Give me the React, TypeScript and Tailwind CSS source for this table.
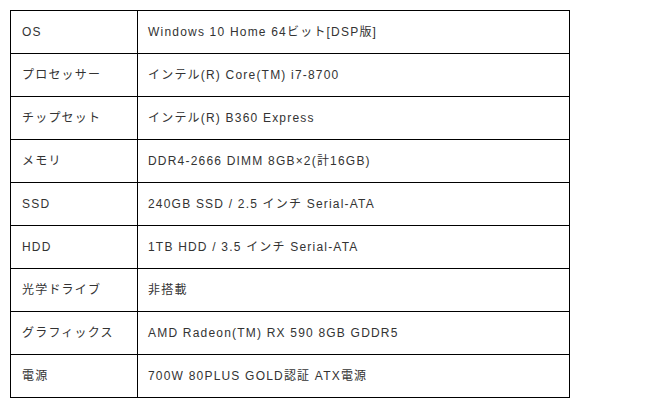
const rows: [string, string][] = [
  ["OS", "Windows 10 Home 64ビット[DSP版]"],
  ["プロセッサー", "インテル(R) Core(TM) i7-8700"],
  ["チップセット", "インテル(R) B360 Express"],
  ["メモリ", "DDR4-2666 DIMM 8GB×2(計16GB)"],
  ["SSD", "240GB SSD / 2.5 インチ Serial-ATA"],
  ["HDD", "1TB HDD / 3.5 インチ Serial-ATA"],
  ["光学ドライブ", "非搭載"],
  ["グラフィックス", "AMD Radeon(TM) RX 590 8GB GDDR5"],
  ["電源", "700W 80PLUS GOLD認証 ATX電源"],
];

export default function App() {
  return (
    <div className="min-h-screen bg-white p-[10px] font-['Liberation_Sans','Noto_Sans_CJK_JP',sans-serif] text-[12px] tracking-[1.2px] text-[#333]">
      <table className="w-[560px] border-collapse">
        <tbody>
          {rows.map(([label, value]) => (
            <tr key={label} className="h-[43px]">
              <td className="w-[127px] border border-black px-[11px] py-0 align-middle">{label}</td>
              <td className="border border-black px-[10px] py-0 align-middle">{value}</td>
            </tr>
          ))}
        </tbody>
      </table>
    </div>
  );
}
